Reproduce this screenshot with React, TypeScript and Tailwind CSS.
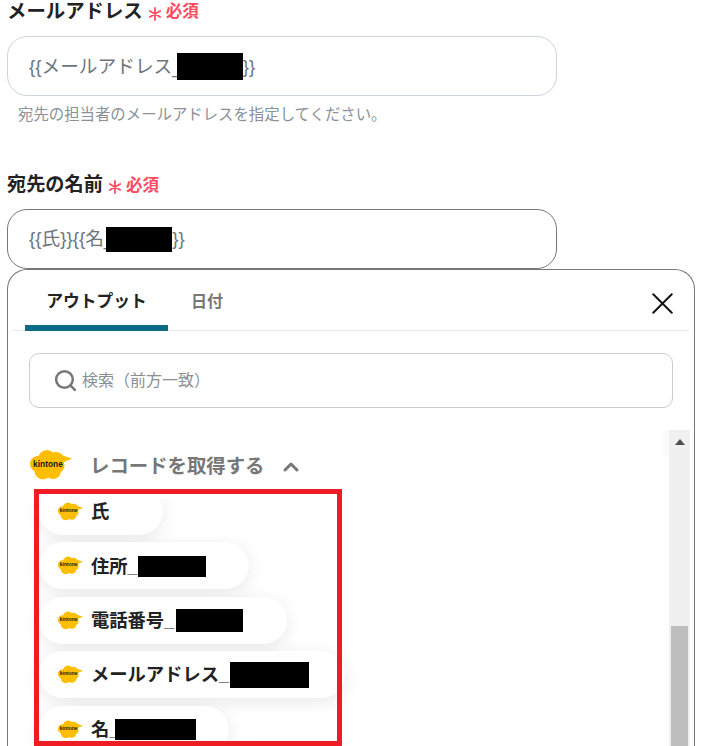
import { ChevronUp, Search, X } from "lucide-react";

const Kintone = ({ w, h }: { w: number; h: number }) => (
  <svg width={w} height={h} viewBox="0 0 42 30" className="shrink-0">
    <g fill="#ffbe00">
      <circle cx="8" cy="14" r="8" />
      <circle cx="17" cy="9" r="9" />
      <circle cx="26" cy="10" r="8" />
      <circle cx="28" cy="16" r="6.5" />
      <circle cx="23" cy="21" r="8" />
      <circle cx="13" cy="21" r="8.5" />
      <path d="M28 4 L42 8.5 L32 13 Z" />
    </g>
    <text x="18" y="16.5" textAnchor="middle" fontSize="8.4" fontWeight="700" fill="#1a1a1a" fontFamily="'Liberation Sans', sans-serif">
      kintone
    </text>
  </svg>
);

const Redact = ({ w, h, ml }: { w: number; h: number; ml: number }) => (
  <span className="inline-block shrink-0 bg-black" style={{ width: w, height: h, marginLeft: ml }} />
);

const Required = () => (
  <span className="ml-[5px] flex items-center text-[16.5px] font-bold text-[#fb4c62]">
    <svg width="14" height="14" viewBox="0 0 14 14" className="mr-[4px] mt-[4px]" stroke="#fb4c62" strokeWidth="1.8" strokeLinecap="round">
      <path d="M7 1 V13 M1.8 4 L12.2 10 M12.2 4 L1.8 10" />
    </svg>
    必須
  </span>
);

const Pill = ({ label, w, rw, rh, gap }: { label: string; w: number; rw: number; rh: number; gap: number }) => (
  <div
    className="flex h-[47px] shrink-0 items-center rounded-full bg-white pl-[19px] shadow-[0_4px_18px_rgba(0,0,0,0.09)]"
    style={{ width: w }}
  >
    <Kintone w={25} h={19} />
    <span className="ml-[8px] flex items-center whitespace-nowrap pt-[1px] text-[18.3px] font-bold text-[#222]">
      {label}
      {rw > 0 && <span>_</span>}
      {rw > 0 && <Redact w={rw} h={rh} ml={gap} />}
    </span>
  </div>
);

export default function App() {
  return (
    <div
      className="relative flex h-[746px] w-[702px] flex-col overflow-hidden bg-white pl-[7px] pr-[7px]"
      style={{ fontFamily: "'Liberation Sans', 'Noto Sans CJK JP', sans-serif" }}
    >
      <div className="flex h-[22px] items-center pt-[1px]">
        <span className="text-[19.4px] font-bold leading-none text-[#222]">メールアドレス</span>
        <Required />
      </div>
      <div className="mt-[14px] flex h-[60px] w-[550px] items-center rounded-[20px] border border-[#ced4da] pl-[21px] text-[18.7px] text-[#6c757d]">
        <span className="pt-[2px]">{"{{メールアドレス_"}</span>
        <Redact w={66} h={27} ml={-6} />
        <span className="pt-[2px]">{"}}"}</span>
      </div>
      <p className="mt-[8px] h-[20px] pl-[11px] pt-[1px] text-[15.4px] leading-[20px] text-[#8a9199]">
        宛先の担当者のメールアドレスを指定してください。
      </p>
      <div className="mt-[50px] flex h-[22px] items-center">
        <span className="text-[19.2px] font-bold leading-none text-[#222]">宛先の名前</span>
        <Required />
      </div>
      <div className="mt-[13px] flex h-[60px] w-[550px] items-center rounded-[20px] border border-[#777] pl-[21px] text-[18.7px] text-[#6c757d]">
        <span className="pt-[1px]">{"{{氏}}{{名_"}</span>
        <Redact w={66} h={25} ml={-8} />
        <span className="pt-[1px]">{"}}"}</span>
      </div>

      <div className="flex min-h-0 flex-1 flex-col rounded-t-[20px] border border-b-0 border-[#777] bg-white">
        <div className="relative mx-[5px] flex h-[61px] shrink-0 border-b border-[#e5e5e5] pl-[12px]">
          <div className="flex h-[61px] w-[143px] flex-col items-center rounded-t-lg border-b-[6px] border-[#0b6a85] pt-[20px] text-[16.8px] font-bold leading-[24px] text-[#222]">
            アウトプット
          </div>
          <div className="ml-[23px] pt-[20px] text-[16px] font-bold leading-[24px] text-[#777]">日付</div>
          <X className="absolute right-[8px] top-[15px] text-[#111]" size={37} strokeWidth={1.3} />
        </div>

        <div className="mx-[21px] mt-[22px] flex h-[55px] shrink-0 items-center rounded-[10px] border border-[#ccc] pl-[23px]">
          <Search size={25} strokeWidth={2.4} className="text-[#777]" />
          <span className="ml-[4px] pt-[1px] text-[16px] text-[#8a8f94]">検索（前方一致）</span>
        </div>

        <div className="mt-[22px] flex min-h-0 flex-1 pr-[4px]">
          <div className="flex min-w-0 flex-1 flex-col">
            <div className="flex h-[69px] shrink-0 items-start pl-[22px] pt-[20px]">
              <Kintone w={42} h={30} />
              <span className="ml-[18px] mt-[1px] text-[19.4px] font-bold leading-[30px] text-[#777]">レコードを取得する</span>
              <ChevronUp size={24} strokeWidth={3} className="ml-[14px] mt-[5px] text-[#777]" />
            </div>
            <div className="min-h-0 flex-1 overflow-hidden pl-[31px]">
              <div className="-mt-[11px] flex flex-col gap-[7.4px] pt-0">
                <Pill label="氏" w={124} rw={0} rh={0} gap={0} />
                <Pill label="住所" w={210} rw={68} rh={21} gap={0} />
                <Pill label="電話番号" w={248} rw={67} rh={23} gap={2} />
                <Pill label="メールアドレス" w={306} rw={79} rh={26} gap={1} />
                <Pill label="名" w={190} rw={81} rh={21} gap={-4} />
              </div>
            </div>
          </div>
          <div className="relative flex w-[21px] shrink-0 flex-col bg-[#f0f0f0]">
            <div className="absolute -left-[6px] top-0 h-[25px] w-[6px] bg-[#fafafa]" />
            <svg width="12" height="7" viewBox="0 0 12 7" className="ml-[4.5px] mt-[9px]">
              <path d="M6 0 L11 6 H1 Z" fill="#505050" />
            </svg>
            <div className="mx-[2px] mt-[180px] flex-1 bg-[#bebebe]" />
          </div>
        </div>
      </div>

      <div className="pointer-events-none absolute left-[34px] top-[489px] h-[257px] w-[308px] border-[5px] border-[#ee1c25]" />
    </div>
  );
}
